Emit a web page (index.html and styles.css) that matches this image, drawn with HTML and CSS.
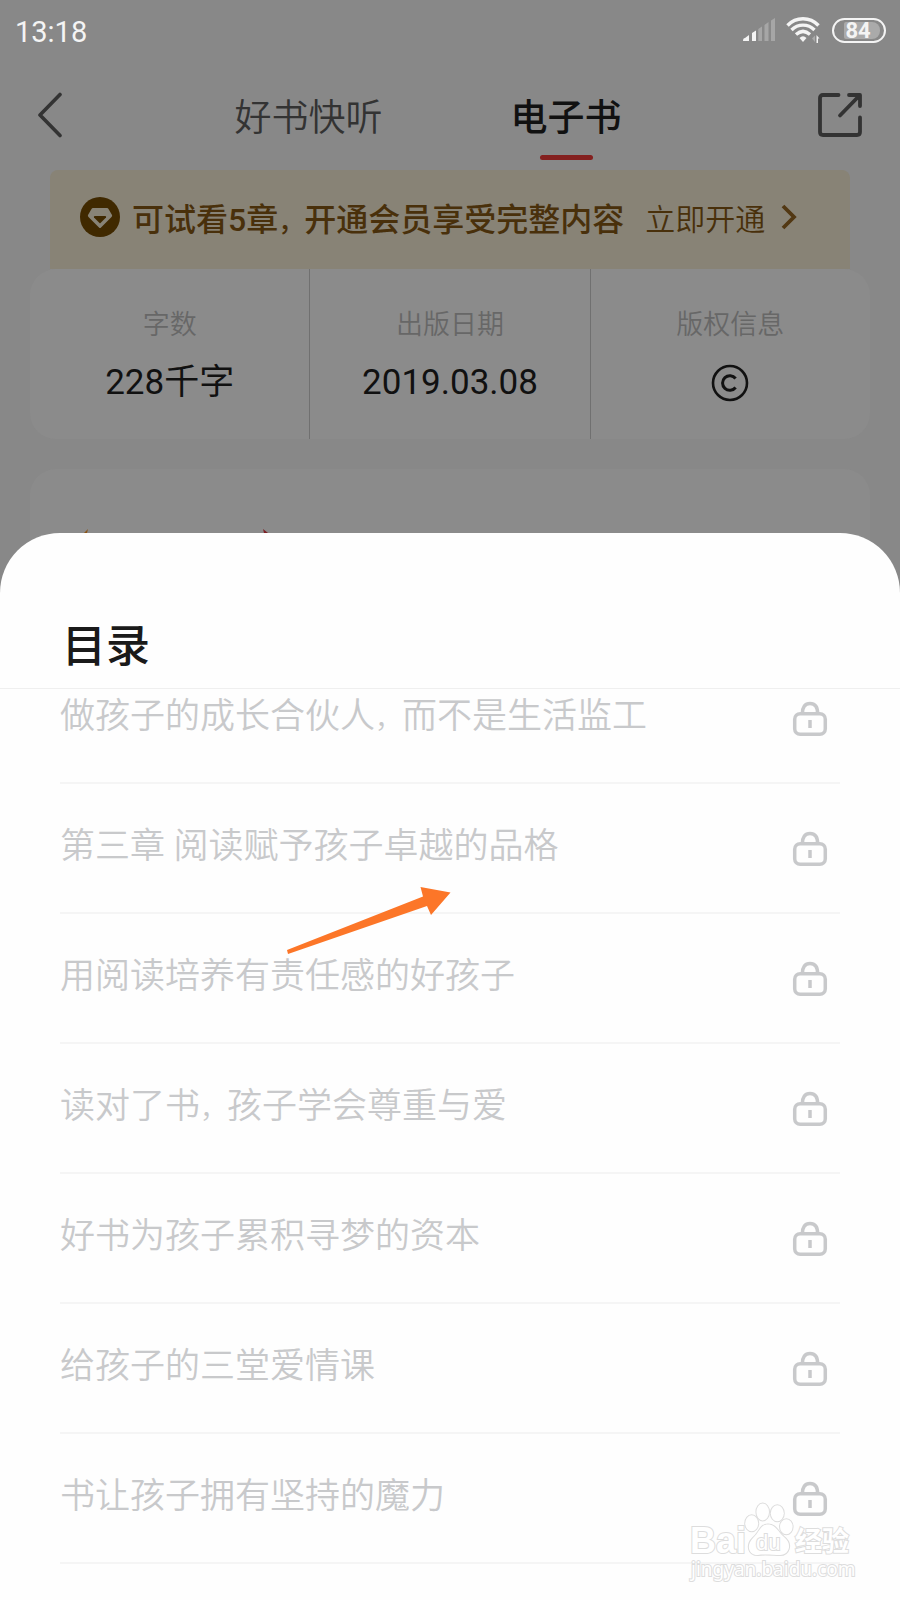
FILE: index.html
```html
<!DOCTYPE html>
<html lang="zh-CN">
<head>
<meta charset="utf-8">
<meta name="viewport" content="width=device-width, initial-scale=1">
<title>电子书</title>
<link rel="stylesheet" href="styles.css">
</head>
<body>
<svg class="symbols" width="0" height="0" aria-hidden="true">
  <symbol id="lock" viewBox="0 0 36 36">
    <g stroke-width="3.500">
      <rect x="2.700" y="12.700" width="30.600" height="20.600" rx="5.500"/>
      <path d="M10.400 12.500 C10.400 6 13 2.600 18 2.600 C23 2.600 25.600 6 25.600 12.500"/>
      <path d="M18 19 V27"/>
    </g>
  </symbol>
</svg>
<div class="status">
  <span class="time">13:18</span>
  <div class="status-icons">
    <svg class="signal" width="34" height="26" viewBox="0 0 34 26" aria-hidden="true">
      <path fill="#f4f4f4" d="M1 24 Q1 21 3 21 L7 18 V24 Z M10 16 L14 13.500 V24 H10 Z"/>
      <path fill="#a6a6a6" d="M16.300 12 L20 9.500 V24 H16.300 Z M22.500 8 L26.500 5 V24 H22.500 Z M29 3.500 L33 1 V24 H29 Z"/>
    </svg>
    <svg width="36" height="28" viewBox="0 0 36 28" aria-hidden="true">
      <g fill="none" stroke="#f4f4f4" stroke-width="3.400">
        <path d="M1.500 9.500 C10 0.500 24 0.500 32.500 9.500"/>
        <path d="M5.500 14 C12 7.500 22 7.500 28.500 14"/>
        <path d="M10 18.500 C14.500 14.500 19.500 14.500 24 18.500"/>
      </g>
      <path fill="#f4f4f4" d="M13.500 22 Q17 18.500 20.500 22 L17 26 Z M30.500 19 L33.500 22.500 H32 V27 H30.500 Z"/>
      <path fill="#aaa" d="M29 19.500 V26 L26 22.500 Z"/>
    </svg>
    <span class="battery"><span class="charge">84</span></span>
  </div>
</div>
<header class="topbar">
  <button class="icon-button" aria-label="返回">
    <svg width="26" height="46" viewBox="0 0 26 46"><path d="M23 2.500 L3 23 L23 43.500" fill="none" stroke="#333" stroke-width="3.600" stroke-linecap="round" stroke-linejoin="round"/></svg>
  </button>
  <nav class="tabs">
    <a class="tab" href="#audio">好书快听</a>
    <a class="tab active" href="#ebook" aria-current="page">电子书</a>
  </nav>
  <button class="icon-button" aria-label="分享">
    <svg width="46" height="46" viewBox="0 0 46 46"><path d="M21.500 3 H6 Q3 3 3 6 V40 Q3 43 6 43 H40 Q43 43 43 40 V25.500 M32 3 H43 V14 M42 4 L23 23.500" fill="none" stroke="#333" stroke-width="3.800" stroke-linecap="round" stroke-linejoin="round"/></svg>
  </button>
</header>
<main>
  <a class="banner" href="#vip">
    <svg width="40" height="40" viewBox="0 0 40 40" aria-hidden="true"><circle cx="20" cy="20" r="20" fill="#402900"/><path d="M13 11 H27 Q28 11 28.500 12 L32 18 Q32.500 19 31.500 20 L21 30.500 Q20 31.500 19 30.500 L8.500 20 Q7.500 19 8 18 L11.500 12 Q12 11 13 11 Z" fill="#888376"/><path d="M14.500 19 H25.500 Q26.500 19.500 26 20.500 L20.500 26 Q20 26.500 19.500 26 L14 20.500 Q13.500 19.500 14.500 19 Z" fill="#402900"/></svg>
    <strong class="banner-text">可试看5章<span class="comma">，</span>开通会员享受完整内容</strong>
    <span class="banner-action">立即开通</span>
    <svg width="16" height="26" viewBox="0 0 16 26" aria-hidden="true"><path d="M2 2 L13 13 L2 24" fill="none" stroke="#523813" stroke-width="3.800"/></svg>
  </a>
  <dl class="stats">
    <div class="stat"><dt>字数</dt><dd>228千字</dd></div>
    <div class="stat"><dt>出版日期</dt><dd>2019.03.08</dd></div>
    <div class="stat"><dt>版权信息</dt><dd><svg width="38" height="38" viewBox="0 0 38 38" role="img" aria-label="版权"><g fill="none" stroke="#111" stroke-width="2.600"><circle cx="19" cy="19" r="17"/><path d="M24.600 14.500 A7.300 7.300 0 1 0 24.600 23.500" stroke-width="3"/></g></svg></dd></div>
  </dl>
  <section class="card">
    <svg width="184" height="4" viewBox="0 0 184 4" aria-hidden="true"><path d="M0 4 L4 0 L3 4 Z" fill="#8a5518"/><path d="M179 0 L184 4 H180 Z" fill="#7c1f24"/></svg>
  </section>
</main>
<section class="sheet" aria-labelledby="toc">
  <h2 class="sheet-title" id="toc">目录</h2>
  <div class="viewport">
    <ul class="chapters">
      <li><span>做孩子的成长合伙人<span class="comma">，</span>而不是生活监工</span><svg class="lock"><use href="#lock"/></svg></li>
      <li><span>第三章 阅读赋予孩子卓越的品格</span><svg class="lock"><use href="#lock"/></svg></li>
      <li><span>用阅读培养有责任感的好孩子</span><svg class="lock"><use href="#lock"/></svg></li>
      <li><span>读对了书<span class="comma">，</span>孩子学会尊重与爱</span><svg class="lock"><use href="#lock"/></svg></li>
      <li><span>好书为孩子累积寻梦的资本</span><svg class="lock"><use href="#lock"/></svg></li>
      <li><span>给孩子的三堂爱情课</span><svg class="lock"><use href="#lock"/></svg></li>
      <li><span>书让孩子拥有坚持的魔力</span><svg class="lock"><use href="#lock"/></svg></li>
    </ul>
  </div>
  <svg class="pointer" width="166" height="70" viewBox="0 0 166 70" aria-hidden="true"><path fill="#fc7628" d="M1 64 L137 10.500 L134.500 1 L164.500 6.500 L145 29 L141 20 L2 68 Z"/></svg>
  <svg class="watermark" width="180" height="90" viewBox="0 0 180 90" role="img" aria-label="百度经验">
    <g class="wm-shape">
      <ellipse cx="67.700" cy="23.300" rx="6.500" ry="8"/>
      <ellipse cx="78.700" cy="12" rx="6.300" ry="8.500"/>
      <ellipse cx="93.300" cy="13.300" rx="6.500" ry="8"/>
      <ellipse cx="102.300" cy="26.700" rx="6.300" ry="7.500"/>
      <path d="M84 24.500 C92 24.500 94 32 100 37 C109 44 105 55 96 55 C90 55 80 54 74 55 C64 55 62 45 69 38 C76 32 76 24.500 84 24.500 Z"/>
    </g>
    <text class="wm-logo" x="6" y="53">Bai</text>
    <text class="wm-du" x="72" y="50">du</text>
    <text class="wm-cn" x="111" y="51">经验</text>
    <text class="wm-url" x="7" y="76">jingyan.baidu.com</text>
  </svg>
</section>
</body>
</html>
```
FILE: styles.css
```css
* { box-sizing: border-box; }

body {
  margin: 0;
  min-height: 100vh;
  display: flex;
  flex-direction: column;
  background: #888;
  color: #111;
  font-family: Roboto, "Noto Sans CJK SC", sans-serif;
}

button {
  border: 0;
  padding: 0;
  background: none;
}

a { color: inherit; text-decoration: none; }
svg { display: block; flex: none; }
.symbols { position: absolute; }

.status {
  height: 62px;
  padding: 0 14px 2px 15px;
  display: flex;
  align-items: center;
  justify-content: space-between;
  color: #f4f4f4;
}

.time {
  padding-top: 4px;
  font-size: 29px;
}

.status-icons {
  display: flex;
  align-items: center;
  gap: 10px;
}

.battery {
  width: 54px;
  height: 25px;
  padding: 2px 4px 2px 10px;
  border: 2px solid #f4f4f4;
  border-radius: 13px;
}

.charge {
  display: block;
  height: 17px;
  border-radius: 2px 8px 8px 2px;
  background: #aaa;
  font-size: 22px;
  font-weight: 700;
  line-height: 17px;
  text-align: center;
  padding-right: 8px;
}

.topbar {
  height: 108px;
  padding: 0 37px;
  display: flex;
  justify-content: space-between;
}

.icon-button { height: 106px; }

.tabs {
  display: flex;
  gap: 128px;
  margin-right: 24px;
}

.tab {
  display: flex;
  flex-direction: column;
  align-items: center;
  padding-top: 29px;
  font-size: 37px;
  font-weight: 350;
  line-height: 56px;
  color: #333;
}

.active {
  color: #111;
  font-weight: 500;
}

.active::after {
  content: "";
  width: 53px;
  height: 5px;
  margin-top: 8px;
  border-radius: 3px;
  background: #84201f;
}

main { padding: 0 30px; }

.banner {
  height: 99px;
  margin: 0 20px;
  padding: 0 30px 6px;
  display: flex;
  align-items: center;
  border-radius: 8px 8px 0 0;
  background: #888376;
  color: #49300b;
}

.banner-text {
  margin-left: 12px;
  font-size: 32px;
  font-weight: 500;
}

.banner-text .comma { font-size: 26px; }

.banner-action {
  margin: 0 16px 0 21px;
  font-size: 30px;
  font-weight: 350;
}

.stats {
  height: 170px;
  margin: 0 0 30px;
  display: flex;
  border-radius: 26px;
  background: #8b8b8b;
}

.stat {
  flex: 1;
  padding-top: 36px;
  text-align: center;
}

.stat + .stat { border-left: 1px solid #707070; }

dt {
  font-size: 27px;
  font-weight: 350;
  line-height: 40px;
  color: #676767;
}

dd {
  height: 52px;
  margin: 11px 0 0;
  padding-top: 2px;
  display: flex;
  align-items: center;
  justify-content: center;
  font-size: 35px;
  line-height: 42px;
}

.card {
  height: 130px;
  padding: 60px 54px 0;
  border-radius: 26px;
  background: #8b8b8b;
}

.sheet {
  position: relative;
  flex: 1;
  margin-top: -66px;
  border-radius: 60px 60px 0 0;
  background: #fefefe;
}

.sheet-title {
  height: 156px;
  margin: 0;
  padding: 82px 62px 0;
  border-bottom: 1px solid #efefef;
  font-size: 44px;
  font-weight: 500;
  line-height: 64px;
  color: #1a1a1a;
}

.viewport { overflow: hidden; }

.chapters {
  margin: -35px 0 0;
  padding: 0 60px;
  list-style: none;
}

.chapters li {
  height: 130px;
  padding: 0 12px 12px 0;
  display: flex;
  align-items: center;
  justify-content: space-between;
  border-bottom: 2px solid #f5f5f5;
  font-size: 35px;
  font-weight: 350;
  color: #c8c9cb;
}

.chapters .comma { font-size: 27px; }

.lock {
  width: 36px;
  height: 36px;
  margin-top: 13px;
  fill: none;
  stroke: #c8c9cb;
}

.pointer {
  position: absolute;
  top: 353px;
  left: 286px;
}

.watermark {
  position: absolute;
  right: 36px;
  bottom: 10px;
  fill: #fff;
  stroke: #ddd;
  stroke-width: 2px;
  paint-order: stroke;
  font-family: "Noto Sans", "Noto Sans CJK SC", sans-serif;
  font-weight: 700;
}

.wm-logo { font: 700 36px "Liberation Sans", sans-serif; }
.wm-du { font: 400 22px "Liberation Sans", sans-serif; }
.wm-cn { font-size: 27px; }
.wm-url { font-size: 19px; font-weight: 400; }
```
